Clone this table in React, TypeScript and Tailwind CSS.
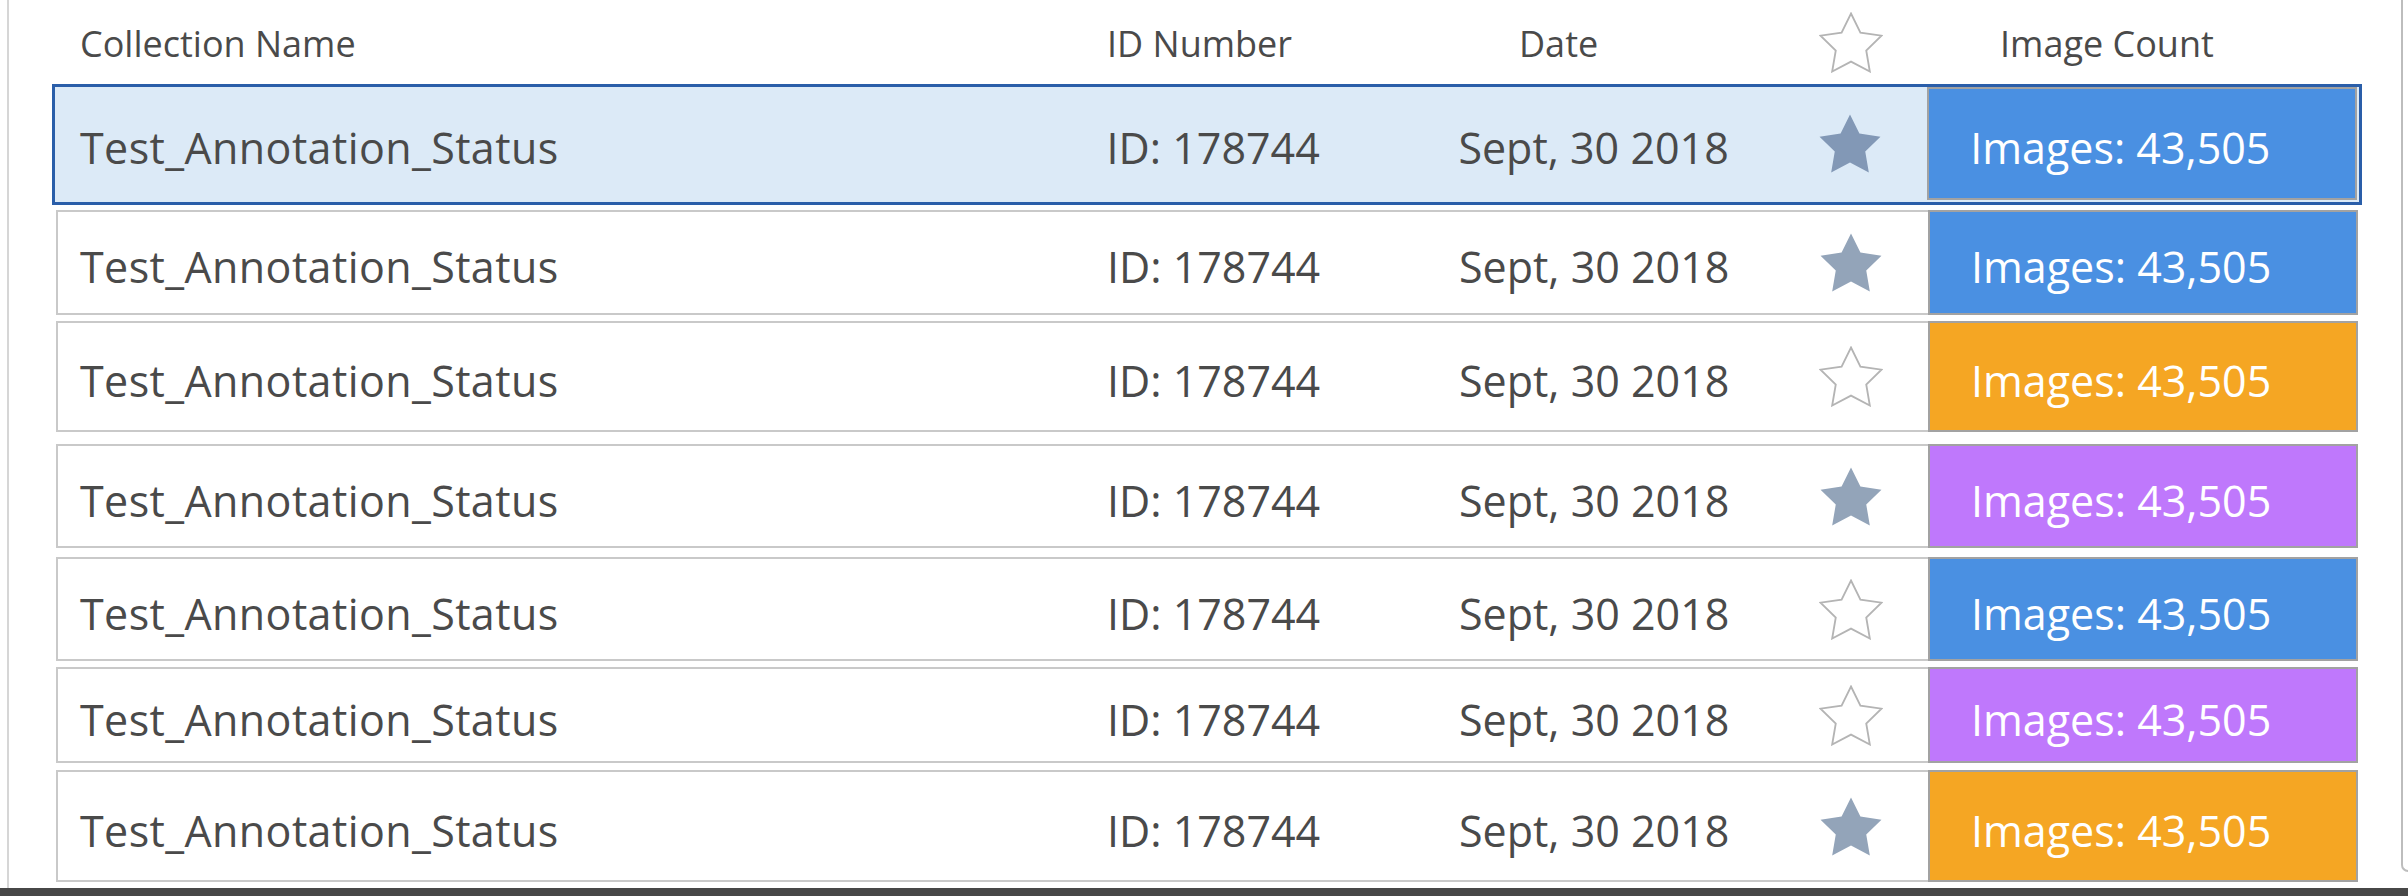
import React from 'react';

// Liste des collections — une ligne par collection, la 1ère est sélectionnée.
type Row = { fav: boolean; tone: 'blue' | 'orange' | 'purple'; h: string; mt: string; selected?: boolean };

const ROWS: Row[] = [
  { fav: true, tone: 'blue', h: 'h-[121px]', mt: 'mt-0', selected: true },
  { fav: true, tone: 'blue', h: 'h-[105px]', mt: 'mt-[5px]' },
  { fav: false, tone: 'orange', h: 'h-[111px]', mt: 'mt-[6px]' },
  { fav: true, tone: 'purple', h: 'h-[104px]', mt: 'mt-[12px]' },
  { fav: false, tone: 'blue', h: 'h-[104px]', mt: 'mt-[9px]' },
  { fav: false, tone: 'purple', h: 'h-[96px]', mt: 'mt-[6px]' },
  { fav: true, tone: 'orange', h: 'h-[112px]', mt: 'mt-[7px]' },
];

const TONE = {
  blue: 'bg-[#4a90e2]',
  orange: 'bg-[#f5a623]',
  purple: 'bg-[#bf78fc]',
};

function Star({ filled, dark }: { filled: boolean; dark?: boolean }) {
  return (
    <svg width="64" height="61" viewBox="1.5 1.5 21 20.02" className="shrink-0">
      <polygon
        points="12,2 15.09,8.26 22,9.27 17,14.14 18.18,21.02 12,17.77 5.82,21.02 7,14.14 2,9.27 8.91,8.26"
        fill={filled ? (dark ? '#8298b6' : '#93a4b9') : '#ffffff'}
        stroke={filled ? 'none' : '#b4b4b4'}
        strokeWidth="0.6"
        strokeLinejoin="miter"
      />
    </svg>
  );
}

function CollectionRow({ r }: { r: Row }) {
  const box = r.selected
    ? 'ml-[43px] w-[2310px] border-[3px] border-[#2a5ea9] bg-[#dceaf7] pr-[2px] pb-[2px]'
    : 'ml-[47px] w-[2302px] border-2 border-[#c9c9c9] bg-white';
  return (
    <div className={`flex items-stretch ${box} ${r.h} ${r.mt}`}>
      <div
        className={`flex items-center pt-[8px] tracking-[0.4px] ${
          r.selected ? 'w-[1052px] pl-[25px]' : 'w-[1049px] pl-[22px]'
        }`}
      >
        Test_Annotation_Status
      </div>
      <div className="flex items-center pt-[8px] w-[352px]">ID: 178744</div>
      <div className="flex items-center pt-[8px] w-[361px]">Sept, 30 2018</div>
      <div className="flex items-center justify-center w-[61px]">
        <Star filled={r.fav} dark={r.selected} />
      </div>
      <div className="w-[47px]" />
      <div
        className={`flex items-center pt-[8px] w-[430px] pl-[41px] text-white border-2 border-[#a2a2a2] ${TONE[r.tone]} ${
          r.selected ? '' : '-my-[2px] -mr-[2px]'
        }`}
      >
        Images: 43,505
      </div>
    </div>
  );
}

export default function App() {
  return (
    <div className="w-[2408px] h-[896px] bg-white flex flex-col overflow-hidden font-['Open_Sans',sans-serif] text-[#4a4a4a]">
      <div className="flex-1 flex min-h-0">
        <div className="w-[7px]" />
        <div className="w-[2px] bg-[#d6d6d6]" />
        <main className="w-[2392px] flex flex-col">
          {/* en-tête des colonnes */}
          <div className="h-[84px] flex items-center text-[36px] leading-none">
            <div className="w-[1098px] pl-[71px] pt-[3px]">Collection Name</div>
            <div className="w-[412px] pt-[3px]">ID Number</div>
            <div className="w-[301px] pt-[3px]">Date</div>
            <div className="w-[61px] flex justify-center">
              <Star filled={false} />
            </div>
            <div className="w-[119px]" />
            <div className="pt-[3px]">Image Count</div>
          </div>
          <div className="flex flex-col text-[43px] leading-none">
            {ROWS.map((r, i) => (
              <CollectionRow key={i} r={r} />
            ))}
          </div>
        </main>
        <div className="self-start h-[872px] w-[7px] border-l-2 border-b-2 border-[#bdbdbd] rounded-bl-[10px]" />
      </div>
      <div className="h-[8px] bg-[#474747]" />
    </div>
  );
}
